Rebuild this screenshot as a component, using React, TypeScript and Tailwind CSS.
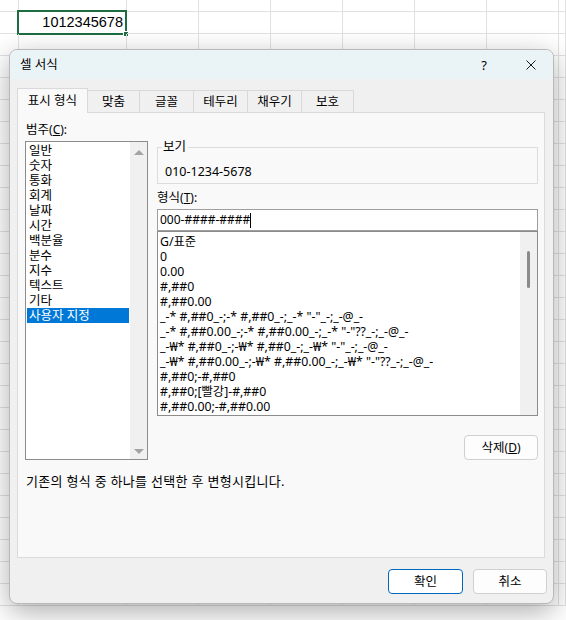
import React from "react";

const CATEGORIES = [
  "일반",
  "숫자",
  "통화",
  "회계",
  "날짜",
  "시간",
  "백분율",
  "분수",
  "지수",
  "텍스트",
  "기타",
  "사용자 지정",
];

const FORMATS = [
  "G/표준",
  "0",
  "0.00",
  "#,##0",
  "#,##0.00",
  '_-* #,##0_-;-* #,##0_-;_-* "-"_-;_-@_-',
  '_-* #,##0.00_-;-* #,##0.00_-;_-* "-"??_-;_-@_-',
  '_-₩* #,##0_-;-₩* #,##0_-;_-₩* "-"_-;_-@_-',
  '_-₩* #,##0.00_-;-₩* #,##0.00_-;_-₩* "-"??_-;_-@_-',
  "#,##0;-#,##0",
  "#,##0;[빨강]-#,##0",
  "#,##0.00;-#,##0.00",
];

const TABS = [
  { label: "표시 형식", w: "w-[71px]" },
  { label: "맞춤", w: "w-[53px]" },
  { label: "글꼴", w: "w-[55px]" },
  { label: "테두리", w: "w-[55px]" },
  { label: "채우기", w: "w-[55px]" },
  { label: "보호", w: "w-[53px]" },
];

const ROWS = 28;
const COLS = 9;

function Sheet() {
  const cells = [];
  for (let r = 0; r < ROWS; r++) {
    for (let c = 0; c < COLS; c++) {
      const selected = r === 1 && c === 1;
      cells.push(
        <div
          key={r + "-" + c}
          className="relative border-r border-b border-[#e1e1e1] flex items-center justify-end"
        >
          {selected && (
            <>
              <span className="pr-[3px] text-[14.5px] text-black font-['Liberation_Sans',sans-serif]">
                1012345678
              </span>
              <div className="absolute -left-[2px] -top-[2px] -right-[1px] -bottom-[2px] border-2 border-[#1e6c41]" />
              <div className="absolute -right-[3px] -bottom-[4px] w-[6px] h-[6px] bg-[#1e6c41] border border-white" />
            </>
          )}
        </div>
      );
    }
  }
  return (
    <div className="grid grid-cols-[19px_108px_72px_72px_72px_72px_72px_72px_1fr] grid-rows-[12px] auto-rows-[22px]">
      {cells}
    </div>
  );
}

function TriUp() {
  return (
    <svg width="10" height="5" viewBox="0 0 10 5">
      <path d="M0 5 L5 0 L10 5 Z" fill="#a3a3a3" />
    </svg>
  );
}

function TriDown() {
  return (
    <svg width="10" height="5" viewBox="0 0 10 5">
      <path d="M0 0 L10 0 L5 5 Z" fill="#a3a3a3" />
    </svg>
  );
}

function Dialog() {
  return (
    <div className="absolute left-[9px] top-[49px] w-[545px] h-[555px] rounded-[8px] border border-[#b9b9b9] bg-[#f0f0f0] shadow-[0_8px_28px_rgba(0,0,0,0.32)] overflow-hidden flex flex-col text-[12px] leading-[16px] text-black font-['Noto_Sans','Noto_Sans_CJK_KR',sans-serif]">
      {/* title bar */}
      <div className="h-[29px] shrink-0 bg-[#eaf4f7] flex items-center pl-[10px] pr-[17px]">
        <span className="text-[12.5px]">셀 서식</span>
        <span className="ml-auto mr-[39px] text-[13px]">?</span>
        <svg width="10" height="10" viewBox="0 0 10 10">
          <path d="M0.5 0.5 L9.5 9.5 M9.5 0.5 L0.5 9.5" stroke="#1a1a1a" strokeWidth="1" />
        </svg>
      </div>

      <div className="px-[7px] pt-[9px]">
        {/* tabs */}
        <div className="flex items-end h-[24px]">
          {TABS.map((t, i) => {
            const active = i === 0;
            return (
              <div
                key={t.label}
                className={
                  t.w +
                  " flex items-center justify-center border border-b-0 border-[#d9d9d9] text-[12.5px] " +
                  (i > 0 ? "-ml-px " : "") +
                  (active
                    ? "relative z-10 h-[25px] -mb-px bg-[#f9f9f9]"
                    : "h-[22px] bg-[#f0f0f0]")
                }
              >
                {t.label}
              </div>
            );
          })}
        </div>

        {/* panel */}
        <div className="w-[528px] h-[446px] border border-[#dadada] bg-[#f9f9f9] pl-[7px] pt-[9px]">
          <div className="flex gap-[9px]">
            {/* category column */}
            <div className="w-[123px] flex flex-col">
              <div className="pl-[1px] h-[16px]">
                <span className="text-[12.5px]">범주</span>(<span className="underline">C</span>):
              </div>
              <div className="mt-[3px] h-[319px] border border-[#8c8c8c] bg-white flex">
                <div className="flex-1 pt-[1px] px-[1px]">
                  {CATEGORIES.map((c, i) => (
                    <div
                      key={c}
                      className={
                        "h-[15px] leading-[15px] pl-[2px] text-[12.5px] " +
                        (i === CATEGORIES.length - 1 ? "bg-[#0078d7] text-white" : "")
                      }
                    >
                      {c}
                    </div>
                  ))}
                </div>
                <div className="w-[17px] bg-[#f0f0f0] flex flex-col items-center justify-between pt-[8px] pb-[5px]">
                  <TriUp />
                  <TriDown />
                </div>
              </div>
            </div>

            {/* right column */}
            <div className="w-[381px] flex flex-col">
              <fieldset className="mt-[17px] border border-[#dcdcdc] px-[7px] pt-[9px] pb-[3px]">
                <legend className="-ml-[3px] pl-[1px] pr-[2px] text-[12.5px]">보기</legend>
                <div className="text-[12.5px]">010-1234-5678</div>
              </fieldset>

              <div className="mt-[6px] h-[16px]">
                <span className="text-[12.5px]">형식</span>(<span className="underline">T</span>):
              </div>
              <div className="mt-[3px] h-[22px] border border-[#9e9e9e] bg-white pl-[2px] flex items-center">
                <span>000-####-####</span>
                <span className="w-px h-[15px] bg-black" />
              </div>
              <div className="h-[185px] border border-[#8c8c8c] bg-white flex">
                <div className="flex-1 pt-[2px] pl-[2px] whitespace-nowrap overflow-hidden">
                  {FORMATS.map((f) => (
                    <div key={f} className="h-[15px] leading-[15px] text-[12.3px]">
                      {f}
                    </div>
                  ))}
                </div>
                <div className="w-[17px] bg-[#f0f0f0] flex flex-col items-center pt-[19px]">
                  <div className="w-[3px] h-[37px] rounded-full bg-[#8a8a8a]" />
                </div>
              </div>

              <div className="mt-[19px] flex justify-end">
                <button
                  type="button"
                  className="w-[74px] h-[25px] rounded-[4px] border border-[#d0d0d0] bg-[#fdfdfd]"
                >
                  <span className="text-[12.5px]">삭제</span>(<span className="underline">D</span>)
                </button>
              </div>
            </div>
          </div>

          <div className="mt-[13px] pl-[1px] text-[13px] tracking-[0.3px]">
            기존의 형식 중 하나를 선택한 후 변형시킵니다.
          </div>
        </div>

        {/* footer buttons */}
        <div className="mt-[11px] -mr-px flex justify-end gap-[10px]">
          <button
            type="button"
            className="w-[75px] h-[25px] rounded-[4px] border border-[#0067c0] bg-white text-[12.5px]"
          >
            확인
          </button>
          <button
            type="button"
            className="w-[74px] h-[25px] rounded-[4px] border border-[#d0d0d0] bg-[#fdfdfd] text-[12.5px]"
          >
            취소
          </button>
        </div>
      </div>
    </div>
  );
}

export default function App() {
  return (
    <div className="relative w-[566px] h-[620px] overflow-hidden bg-white">
      <Sheet />
      <Dialog />
    </div>
  );
}
